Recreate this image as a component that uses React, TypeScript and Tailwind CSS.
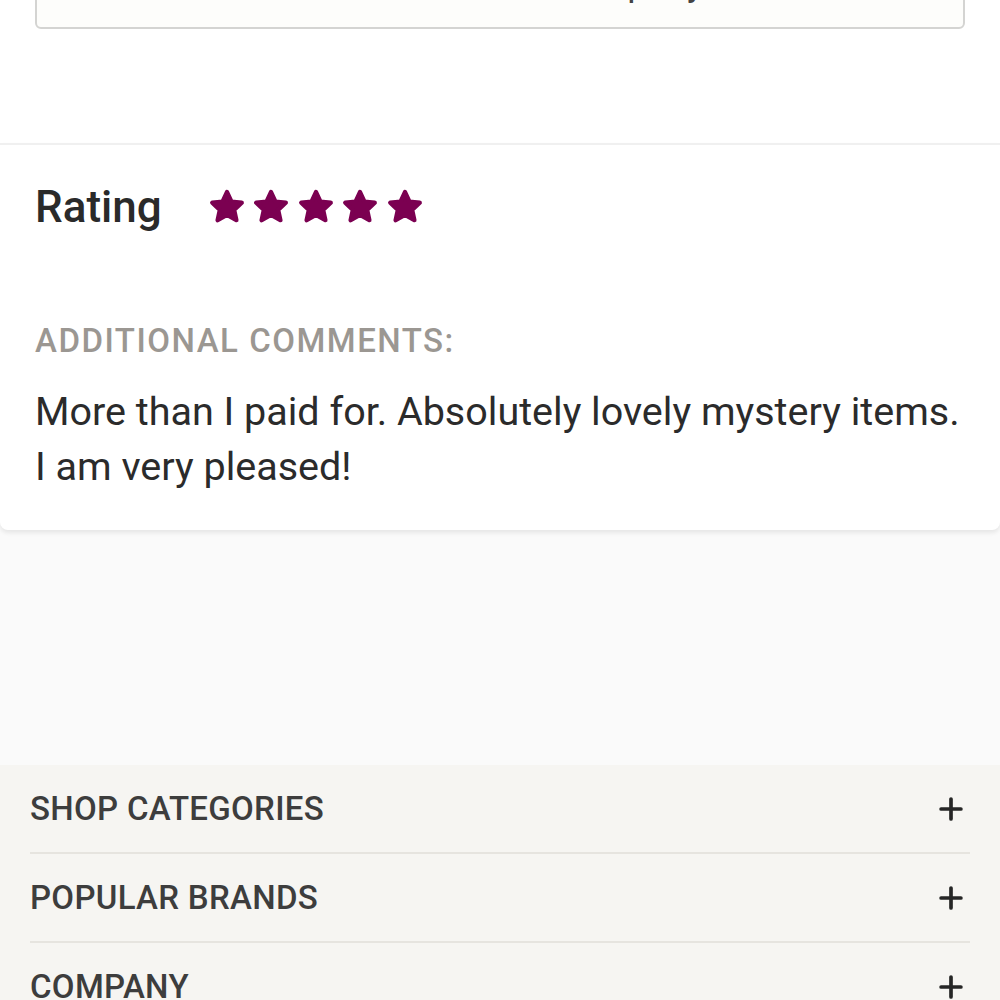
import { Plus } from 'lucide-react';

function Star() {
  return (
    <svg width="38" height="38" viewBox="0 0 24 24" className="shrink-0">
      <polygon
        points="12,2.6 14.8,8.6 21.3,9.3 16.5,13.8 17.9,20.3 12,17 6.1,20.3 7.5,13.8 2.7,9.3 9.2,8.6"
        fill="#7b0051"
        stroke="#7b0051"
        strokeWidth="2.8"
        strokeLinejoin="round"
      />
    </svg>
  );
}

const footerItems = ['SHOP CATEGORIES', 'POPULAR BRANDS', 'COMPANY', 'CUSTOMER SERVICE'];

export default function App() {
  return (
    <div className="min-h-screen w-full overflow-hidden bg-[#fafafa] font-['Roboto',sans-serif] text-[#2b2b2b]">
      {/* Previous review button (scrolled off) */}
      <div className="flex h-[143px] flex-col bg-white px-[35px]">
        <div className="mt-[-52px] flex h-[81px] items-start rounded-md border-2 border-[#d4d4d2] bg-[#fdfdfb] pl-[428px] pt-[15px]">
          <span className="text-[36px] leading-[36px] text-[#444]">View Company</span>
        </div>
      </div>

      {/* Review card */}
      <section className="rounded-b-lg border-t-2 border-[#f0f0f0] bg-white px-[35px] pb-[36px] pt-[36px] shadow-[0_3px_4px_rgba(0,0,0,0.08)]">
        <div className="flex items-center">
          <h2 className="text-[44px] font-medium leading-[52px] text-[#2a2a2a]">Rating</h2>
          <div className="ml-[46px] flex gap-[6.5px]">
            <Star />
            <Star />
            <Star />
            <Star />
            <Star />
          </div>
        </div>

        <p className="mt-[88px] text-[33px] font-medium leading-[40px] tracking-[1.5px] text-[#9b9792]">
          ADDITIONAL COMMENTS:
        </p>
        <p className="mt-[23px] text-[39.5px] leading-[55px] text-[#2b2b2b]">
          More than I paid for. Absolutely lovely mystery items.
          <br />
          I am very pleased!
        </p>
      </section>

      <div className="h-[235px]" />

      {/* Footer accordion */}
      <footer className="bg-[#f6f5f2] px-[30px]">
        {footerItems.map((item) => (
          <div
            key={item}
            className="flex h-[89px] items-center justify-between border-b-2 border-[#e6e4df]"
          >
            <span className="text-[33px] font-medium tracking-[0.3px] text-[#3d3d3d]">{item}</span>
            <Plus size={34} strokeWidth={2.6} className="mr-[2px] text-[#262626]" />
          </div>
        ))}
      </footer>
    </div>
  );
}
